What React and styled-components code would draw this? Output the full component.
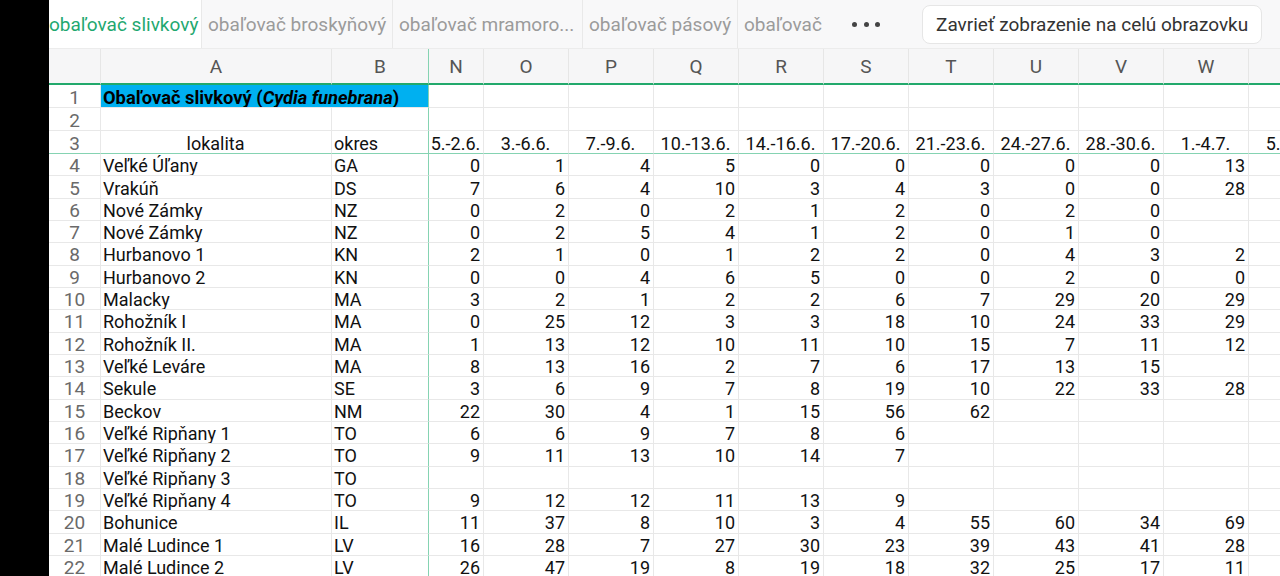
import React from "react";
import styled, { createGlobalStyle } from "styled-components";

const GlobalStyle = createGlobalStyle`
  html, body {
    margin: 0;
    padding: 0;
    background: #000;
    overflow: hidden;
  }
  body {
    font-family: Roboto, "Noto Sans", "Liberation Sans", sans-serif;
  }
`;

const COLS = "52px 231px 97px 55px repeat(10, 85px)";
const ROW_H = "22.33px";

const Screen = styled.div`
  display: flex;
  width: 1280px;
  height: 576px;
  background: #000;
`;

const Side = styled.div`
  width: 49px;
  flex: none;
  background: #000;
`;

const Main = styled.div`
  flex: 1;
  display: flex;
  flex-direction: column;
  background: #fff;
  overflow: hidden;
`;

const TabBar = styled.div`
  height: 49px;
  flex: none;
  display: flex;
  align-items: center;
  background: #f8f8f9;
  border-bottom: 1px solid #ececec;
  box-sizing: border-box;
  white-space: nowrap;
`;

const Tab = styled.div`
  height: 100%;
  display: flex;
  align-items: center;
  box-sizing: border-box;
  width: ${(p) => p.$w}px;
  flex: none;
  padding: ${(p) => (p.$active ? "1px 0 0 0" : "1px 6px 0")};
  font-size: 19px;
  color: ${(p) => (p.$active ? "#1fa870" : "#9b9b9b")};
  background: ${(p) => (p.$active ? "#fff" : "transparent")};
  border-right: ${(p) => (p.$last ? "none" : "1px solid #e9e9e9")};
  overflow: hidden;
`;

const More = styled.div`
  width: 92px;
  flex: none;
  box-sizing: border-box;
  padding-left: 22px;
  display: flex;
  align-items: center;
  gap: 6.5px;

  span {
    width: 5px;
    height: 5px;
    border-radius: 50%;
    background: #444;
  }
`;

const FullButton = styled.button`
  height: 39px;
  padding: 1px 13px 0;
  border: 1px solid #e6e6e6;
  border-radius: 8px;
  background: #fff;
  color: #333;
  font-family: inherit;
  font-size: 19px;
  white-space: nowrap;
  flex: none;
`;

const Sheet = styled.div`
  display: grid;
  grid-template-columns: ${COLS};
  grid-template-rows: 36px 23px 23px 23px;
  grid-auto-rows: ${ROW_H};
  width: max-content;
`;

const Head = styled.div`
  box-sizing: border-box;
  background: #f6f6f7;
  border-bottom: 2px solid #22a96c;
  border-right: 1px solid ${(p) => (p.$freeze ? "#85d3b2" : "#e6e6e6")};
  display: flex;
  align-items: center;
  justify-content: center;
  color: #555;
  font-size: 19px;
`;

const RowNum = styled.div`
  box-sizing: border-box;
  border-bottom: 1px solid ${(p) => (p.$freeze ? "#85d3b2" : "#e8e8e8")};
  border-right: 1px solid #e8e8e8;
  display: flex;
  align-items: center;
  justify-content: center;
  padding-top: 2px;
  color: #6a6a6a;
  font-size: 19px;
`;

const Cell = styled.div`
  box-sizing: border-box;
  border-bottom: 1px solid ${(p) => (p.$freeze ? "#85d3b2" : "#e8e8e8")};
  border-right: 1px solid ${(p) => (p.$vfreeze ? "#85d3b2" : "#e8e8e8")};
  display: flex;
  align-items: center;
  justify-content: ${(p) =>
    p.$align === "right" ? "flex-end" : p.$align === "center" ? "center" : "flex-start"};
  padding: 2px 3px 0 2px;
  color: #111;
  font-size: 18px;
  white-space: nowrap;
  overflow: hidden;
  background: ${(p) => p.$bg || "transparent"};
  grid-column: ${(p) => (p.$span ? `span ${p.$span}` : "auto")};
`;

const Title = styled.span`
  font-weight: 700;
  font-size: 18.3px;
  color: #000;

  em {
    font-style: italic;
  }
`;

const letters = ["A", "B", "N", "O", "P", "Q", "R", "S", "T", "U", "V", "W", "X"];
const dates = [
  "5.-2.6.",
  "3.-6.6.",
  "7.-9.6.",
  "10.-13.6.",
  "14.-16.6.",
  "17.-20.6.",
  "21.-23.6.",
  "24.-27.6.",
  "28.-30.6.",
  "1.-4.7.",
  "5.-8.7.",
];

const data = [
  ["Veľké Úľany", "GA", [0, 1, 4, 5, 0, 0, 0, 0, 0, 13]],
  ["Vrakúň", "DS", [7, 6, 4, 10, 3, 4, 3, 0, 0, 28]],
  ["Nové Zámky", "NZ", [0, 2, 0, 2, 1, 2, 0, 2, 0]],
  ["Nové Zámky", "NZ", [0, 2, 5, 4, 1, 2, 0, 1, 0]],
  ["Hurbanovo 1", "KN", [2, 1, 0, 1, 2, 2, 0, 4, 3, 2]],
  ["Hurbanovo 2", "KN", [0, 0, 4, 6, 5, 0, 0, 2, 0, 0]],
  ["Malacky", "MA", [3, 2, 1, 2, 2, 6, 7, 29, 20, 29]],
  ["Rohožník I", "MA", [0, 25, 12, 3, 3, 18, 10, 24, 33, 29]],
  ["Rohožník II.", "MA", [1, 13, 12, 10, 11, 10, 15, 7, 11, 12]],
  ["Veľké Leváre", "MA", [8, 13, 16, 2, 7, 6, 17, 13, 15]],
  ["Sekule", "SE", [3, 6, 9, 7, 8, 19, 10, 22, 33, 28]],
  ["Beckov", "NM", [22, 30, 4, 1, 15, 56, 62]],
  ["Veľké Ripňany 1", "TO", [6, 6, 9, 7, 8, 6]],
  ["Veľké Ripňany 2", "TO", [9, 11, 13, 10, 14, 7]],
  ["Veľké Ripňany 3", "TO", []],
  ["Veľké Ripňany 4", "TO", [9, 12, 12, 11, 13, 9]],
  ["Bohunice", "IL", [11, 37, 8, 10, 3, 4, 55, 60, 34, 69]],
  ["Malé Ludince 1", "LV", [16, 28, 7, 27, 30, 23, 39, 43, 41, 28]],
  ["Malé Ludince 2", "LV", [26, 47, 19, 8, 19, 18, 32, 25, 17, 11]],
];

const numCols = 11;

const App = () => {
  return (
    <>
      <GlobalStyle />
      <Screen>
        <Side />
        <Main>
          <TabBar>
            <Tab $active $w={153}>obaľovač slivkový</Tab>
            <Tab $w={191}>obaľovač broskyňový</Tab>
            <Tab $w={190}>obaľovač mramoro...</Tab>
            <Tab $w={155}>obaľovač pásový</Tab>
            <Tab $last $w={92}>obaľovač</Tab>
            <More>
              <span />
              <span />
              <span />
            </More>
            <FullButton>Zavrieť zobrazenie na celú obrazovku</FullButton>
          </TabBar>
          <Sheet>
            <Head />
            {letters.map((l) => (
              <Head key={l} $freeze={l === "B"}>
                {l}
              </Head>
            ))}

            <RowNum>1</RowNum>
            <Cell $span={2} $bg="#00b0f0" $vfreeze>
              <Title>
                Obaľovač slivkový (<em>Cydia funebrana</em>)
              </Title>
            </Cell>
            {Array.from({ length: numCols }).map((_, i) => (
              <Cell key={i} />
            ))}

            <RowNum>2</RowNum>
            <Cell />
            <Cell $vfreeze />
            {Array.from({ length: numCols }).map((_, i) => (
              <Cell key={i} />
            ))}

            <RowNum $freeze>3</RowNum>
            <Cell $freeze $align="center">
              lokalita
            </Cell>
            <Cell $freeze $vfreeze>
              okres
            </Cell>
            {dates.map((d) => (
              <Cell key={d} $freeze $align="center">
                {d}
              </Cell>
            ))}

            {data.map(([place, district, values], r) => (
              <React.Fragment key={r}>
                <RowNum>{r + 4}</RowNum>
                <Cell>{place}</Cell>
                <Cell $vfreeze>{district}</Cell>
                {Array.from({ length: numCols }).map((_, i) => (
                  <Cell key={i} $align="right">
                    {values[i] !== undefined ? values[i] : ""}
                  </Cell>
                ))}
              </React.Fragment>
            ))}
          </Sheet>
        </Main>
      </Screen>
    </>
  );
};

export default App;
